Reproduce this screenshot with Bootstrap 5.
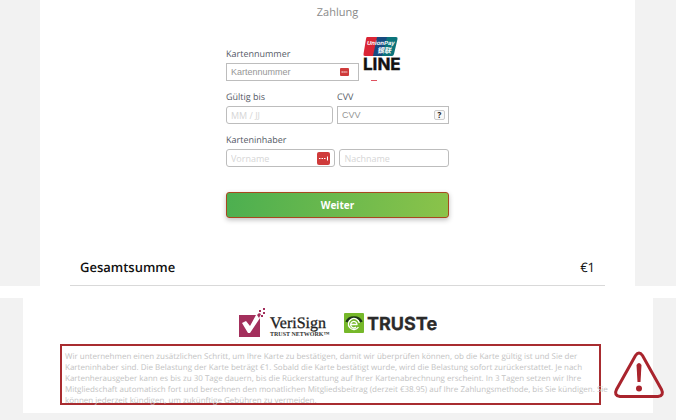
<!DOCTYPE html>
<html lang="de">
<head>
<meta charset="utf-8">
<meta name="viewport" content="width=device-width, initial-scale=1">
<title>Zahlung</title>
<link href="https://cdn.jsdelivr.net/npm/bootstrap@5.3.0/dist/css/bootstrap.min.css" rel="stylesheet">
<style>
body{font-family:"Open Sans","Noto Sans",sans-serif;font-size:9px;line-height:12px;color:#555a66;background:#fff;text-rendering:geometricPrecision}
.band{background:#f2f2f2}
.checkout{margin:0 41px 0 40px;padding:5px 30px 0}
.page-title{font-size:11px;line-height:16px;color:#8a8a8a}
.pay-form{width:223px}
.pay-form label{display:block;line-height:12px;margin-bottom:3px}
.form-line{padding-top:10px}
.field{height:18px;padding:0 4px;font:9px/16px "Open Sans","Noto Sans",sans-serif;border:1px solid #bdbdbd;border-radius:3px;background:#fff;color:#555}
.field::placeholder{color:#d6d6d6;opacity:1}
.sharp{border-radius:0;font-family:"Liberation Sans",Arial,sans-serif}
.sharp::placeholder{color:#969696}
.number-col{width:133px}
.left-col{width:107px}
.in-field{right:10px;top:0;bottom:0;margin:auto 0}
.in-field-end{right:5px}
.help{right:4px;top:0;bottom:0;margin:auto 0;width:11px;height:10px;padding:0;border:1px solid #ccc;border-radius:2px;background:#f8f8f8;font-size:8px;line-height:8px;font-weight:700;color:#222}
.go{height:26px;margin-top:25px;padding:0;font-size:10px;line-height:22px;font-weight:700;color:#fff;border:1px solid #a8481f;border-radius:3px;background:linear-gradient(100deg,#4caf50,#8bc34a);box-shadow:0 2px 5px rgba(0,0,0,.25)}
.go:hover{color:#fff}
.total{margin-top:39px;padding:0 10px 8px;font-size:13px;line-height:20px;color:#111;border-bottom:1px solid #d9d9d9}
.trust-band{margin-top:12px;padding-bottom:8px}
.trust{margin:0 23px;padding:9px 52px 8px 37px}
.seals{gap:10px;margin:0 -15px 5px 0}
.notice{height:61px;padding:5px 3px 0;border:2px solid #a82c30;color:#c3c3c3;font-size:8px;line-height:11px;white-space:nowrap}
.alert-sign{right:-12px;bottom:14px}
</style>
</head>
<body>
<section class="band">
  <main class="checkout bg-white">
    <h1 class="page-title fw-normal text-center mb-0">Zahlung</h1>
    <form class="pay-form mx-auto">
      <div class="d-flex align-items-end mt-3">
        <div class="number-col">
          <label for="nr">Kartennummer</label>
          <div class="position-relative">
            <input id="nr" class="field sharp w-100 d-block" placeholder="Kartennummer">
            <svg class="in-field position-absolute" width="9" height="8" viewBox="0 0 9 8"><rect width="9" height="8" rx="1" fill="#cf3b3b"/><path d="M1.5 4h6" stroke="#fff" stroke-dasharray="1.4 .5"/></svg>
          </div>
        </div>
        <svg class="ms-1" width="40" height="44" viewBox="0 0 40 44" role="img" aria-label="UnionPay, LINE">
          <path d="M4 0h13l-5 19H2q-2 0-1.500-2L3 2Q3.300 0 4 0" fill="#da2535"/>
          <path d="M14 0h12l-5 19H10z" fill="#174a80"/>
          <path d="M24 0h9q2 0 1.500 2L31 17q-.5 2-2 2H19z" fill="#0b747b"/>
          <text x="4" y="8" font-size="6" font-style="italic" font-weight="700" fill="#fff" font-family="Liberation Sans">UnionPay</text>
          <text x="14" y="16" font-size="7" font-weight="700" font-style="italic" fill="#fff" font-family="Noto Sans CJK SC">银联</text>
          <text x="0" y="33" font-size="17" font-weight="700" fill="#111" stroke="#111" stroke-width=".4" font-family="Inter">LINE</text>
          <path d="M8 43.500h6" stroke="#df5260" fill="none"/>
        </svg>
      </div>
      <div class="form-line d-flex gap-1">
        <div class="left-col flex-shrink-0">
          <label for="exp">Gültig bis</label>
          <input id="exp" class="field w-100 d-block" placeholder="MM / JJ">
        </div>
        <div class="flex-fill">
          <label for="cvv">CVV</label>
          <div class="position-relative">
            <input id="cvv" class="field sharp w-100 d-block" placeholder="CVV">
            <button type="button" class="help position-absolute" aria-label="CVV-Hilfe">?</button>
          </div>
        </div>
      </div>
      <div class="form-line">
        <label for="vn">Karteninhaber</label>
        <div class="d-flex gap-1">
          <div class="position-relative w-50">
            <input id="vn" class="field w-100 d-block" placeholder="Vorname">
            <svg class="in-field in-field-end position-absolute" width="13" height="13" viewBox="0 0 13 13"><rect width="13" height="13" rx="2" fill="#cf3b3b"/><path d="M2 6.500h1.500m1 0H6m1 0h1.500M10.500 4.500v4" stroke="#fff"/></svg>
          </div>
          <input class="field w-50 d-block" aria-label="Nachname" placeholder="Nachname">
        </div>
      </div>
      <button type="button" class="btn go w-100 d-block">Weiter</button>
    </form>
    <div class="total d-flex justify-content-between"><span class="fw-semibold">Gesamtsumme</span><span>€1</span></div>
  </main>
</section>
<section class="band trust-band">
  <div class="trust bg-white position-relative">
    <div class="seals d-flex justify-content-center align-items-center">
      <svg width="95" height="32" viewBox="0 0 95 32" role="img" aria-label="VeriSign Trust Network">
        <path d="M0 8h17l-6 11-4-5-4 2 6 10h2L21 11v19H0z" fill="#a32f5c"/>
        <path d="M18 8l2-2 2 1-2 4zM20 3h2v2h-2zM24 1h2v2h-2zM24 5h2v2h-2zM22 8h2v2h-2z" fill="#a32f5c"/>
        <text x="31" y="21" font-size="16" fill="#222" stroke="#222" stroke-width=".3" font-family="Liberation Serif">VeriSign</text>
        <text x="31" y="29" font-size="6" font-weight="700" fill="#333" font-family="Liberation Serif">TRUST NETWORK™</text>
      </svg>
      <svg width="93" height="24" viewBox="0 0 93 24" role="img" aria-label="TRUSTe">
        <rect y="2" width="20" height="20" rx="1" fill="#76b82a"/>
        <path d="M2.500 11a8 7 0 0 1 15 0" fill="none" stroke="#1c3518" stroke-width="2.500"/>
        <path d="M7 13.500h6a3.200 3.200 0 1 0-1 2.500M14.500 16a5.500 5.500 0 1 1 .8-4" fill="none" stroke="#fff" stroke-width="1.300"/>
        <text x="23" y="19" font-size="18" font-weight="700" fill="#2a2a2a" stroke="#2a2a2a" stroke-width=".3" font-family="Inter">TRUSTe</text>
      </svg>
    </div>
    <p class="notice mb-0">Wir unternehmen einen zusätzlichen Schritt, um Ihre Karte zu bestätigen, damit wir überprüfen können, ob die Karte gültig ist und Sie der<br>Karteninhaber sind. Die Belastung der Karte beträgt €1. Sobald die Karte bestätigt wurde, wird die Belastung sofort zurückerstattet. Je nach<br>Kartenherausgeber kann es bis zu 30 Tage dauern, bis die Rückerstattung auf Ihrer Kartenabrechnung erscheint. In 3 Tagen setzen wir Ihre<br>Mitgliedschaft automatisch fort und berechnen den monatlichen Mitgliedsbeitrag (derzeit €38.95) auf Ihre Zahlungsmethode, bis Sie kündigen. Sie<br>können jederzeit kündigen, um zukünftige Gebühren zu vermeiden.</p>
    <svg class="alert-sign position-absolute" width="52" height="48" viewBox="0 0 52 48" role="img" aria-label="Warnung"><path d="M22.500 4.500q3.500-5 7 0l19 34q3 6-3.500 7H7q-6.500-1-3.500-7z" fill="none" stroke="#a9242d" stroke-width="3"/><path d="M23.500 14q2.500-4 5 0l-1 17h-3z" fill="#a9242d"/><circle cx="26" cy="37.500" r="3" fill="#a9242d"/></svg>
  </div>
</section>
<script src="https://cdn.jsdelivr.net/npm/bootstrap@5.3.0/dist/js/bootstrap.bundle.min.js"></script>
</body>
</html>
